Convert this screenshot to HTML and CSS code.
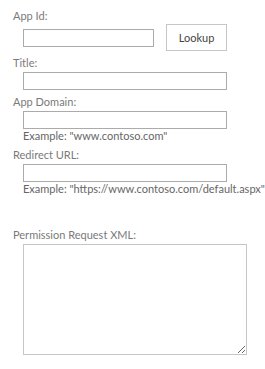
FILE: index.html
```html
<!DOCTYPE html>
<html>
<head>
<meta charset="utf-8">
<link rel="stylesheet" href="styles.css">
</head>
<body>
<div class="form">
  <div class="label first">App Id:</div>
  <div class="row">
    <input class="box short" type="text">
    <button class="btn">Lookup</button>
  </div>
  <div class="label">Title:</div>
  <div class="ctl"><input class="box wide" type="text"></div>
  <div class="label">App Domain:</div>
  <div class="ctl"><input class="box wide" type="text"></div>
  <div class="hint">Example: "www.contoso.com"</div>
  <div class="label">Redirect URL:</div>
  <div class="ctl"><input class="box wide" type="text"></div>
  <div class="hint">Example: "https://www.contoso.com/default.aspx"</div>
  <div class="label xml">Permission Request XML:</div>
  <div class="ctl"><textarea class="area"></textarea></div>
</div>
</body>
</html>
```
FILE: styles.css
```css
html, body {
  margin: 0;
  padding: 0;
  background: #fff;
}
.form {
  font-family: "Lato", "Open Sans", sans-serif;
  font-size: 11px;
  color: #7a7a7a;
  padding: 8px 0 0 13px;
  white-space: nowrap;
}
.label {
  height: 16px;
  line-height: 16px;
  margin-top: 4px;
}
.label.first {
  margin-top: 0;
}
.label.xml {
  margin-top: 31px;
}
.row {
  display: flex;
  align-items: center;
  padding-left: 10px;
  height: 27px;
  margin-top: 0;
}
.ctl {
  padding-left: 10px;
  margin-top: 1px;
  display: flex;
}
.box {
  box-sizing: border-box;
  height: 18px;
  border: 1px solid #ababab;
  margin: 0;
  padding: 0 3px;
  background: #fff;
  outline: none;
}
.short {
  width: 131px;
}
.wide {
  width: 204px;
}
.btn {
  box-sizing: border-box;
  margin-left: 12px;
  width: 61px;
  height: 27px;
  border: 1px solid #c6c6c6;
  background: #fff;
  font-family: "Lato", "Open Sans", sans-serif;
  font-size: 11px;
  color: #444;
  padding: 0;
}
.hint {
  padding-left: 10px;
  height: 14px;
  line-height: 14px;
  margin-top: 0;
  color: #666;
}
.area {
  box-sizing: border-box;
  width: 224px;
  height: 111px;
  border: 1px solid #c6c6c6;
  margin: 0;
  padding: 2px;
  outline: none;
  resize: both;
}
```
